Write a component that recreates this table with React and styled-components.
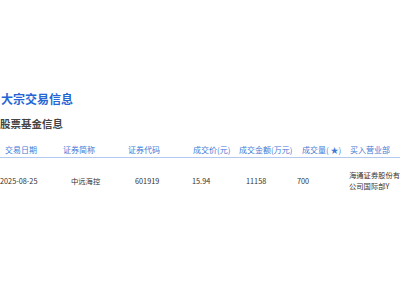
import React from 'react';
import styled, { createGlobalStyle } from 'styled-components';

const GlobalStyle = createGlobalStyle`
  html, body {
    margin: 0;
    padding: 0;
    background: #fff;
    overflow: hidden;
  }
  body {
    font-family: "Noto Sans CJK SC", "Noto Sans", sans-serif;
  }
`;

const Page = styled.div`
  width: 400px;
  height: 300px;
  padding-top: 91px;
  box-sizing: border-box;
`;

const Title = styled.h1`
  margin: 0 0 0 1px;
  font-size: 12px;
  line-height: 16px;
  font-weight: 700;
  color: #2566d4;
`;

const SubTitle = styled.h2`
  margin: 10px 0 0 0;
  font-size: 10.5px;
  line-height: 14px;
  font-weight: 700;
  color: #444;
`;

const Table = styled.div`
  margin-top: 13px;
  width: 400px;
`;

const Row = styled.div`
  display: grid;
  grid-template-columns: 63px 65px 64px 47px 58px 52px 56px;
  align-items: center;
`;

const HeadRow = styled(Row)`
  padding-bottom: 1px;
  border-bottom: 1px solid #b3c9ef;
`;

const BodyRow = styled(Row)`
  padding: 12px 0;
`;

const HeadCell = styled.div`
  padding-left: ${(p) => p.$offset}px;
  font-size: 8px;
  line-height: 12px;
  color: #3f7ad6;
  white-space: nowrap;
`;

const Cell = styled.div`
  padding-left: ${(p) => p.$offset}px;
  font-size: 7.3px;
  line-height: 11px;
  color: #333;
`;

const columns = [
  { title: '交易日期', head: 5, body: 0 },
  { title: '证券简称', head: 0, body: 8 },
  { title: '证券代码', head: 0, body: 7 },
  { title: '成交价(元)', head: 1, body: 0 },
  { title: '成交金额(万元)', head: 0, body: 7 },
  { title: '成交量( ★)', head: 5, body: 0 },
  { title: '买入营业部', head: 1, body: 0 },
];

const rows = [
  ['2025-08-25', '中远海控', '601919', '15.94', '11158', '700', '海通证券股份有公司国际部Y'],
];

export default function App() {
  return (
    <>
      <GlobalStyle />
      <Page>
        <Title>大宗交易信息</Title>
        <SubTitle>股票基金信息</SubTitle>
        <Table>
          <HeadRow>
            {columns.map((c) => (
              <HeadCell key={c.title} $offset={c.head}>{c.title}</HeadCell>
            ))}
          </HeadRow>
          {rows.map((r, i) => (
            <BodyRow key={i}>
              {r.map((v, j) => (
                <Cell key={j} $offset={columns[j].body}>{v}</Cell>
              ))}
            </BodyRow>
          ))}
        </Table>
      </Page>
    </>
  );
}
